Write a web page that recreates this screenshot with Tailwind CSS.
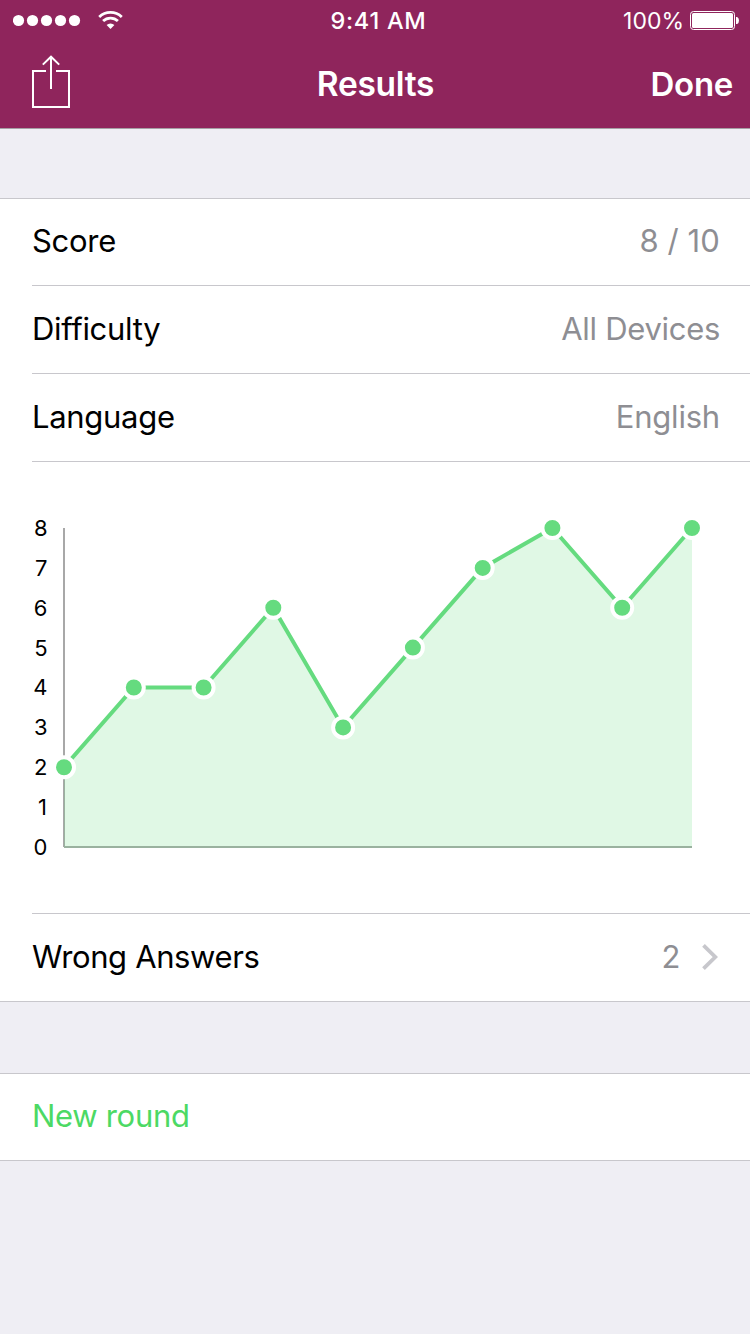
<!DOCTYPE html>
<html lang="en">
<head>
<meta charset="utf-8">
<title>Results</title>
<script src="https://cdn.jsdelivr.net/npm/@tailwindcss/browser@4"></script>
</head>
<body class="w-[750px] h-[1334px] overflow-hidden bg-[#efeef4] font-['Inter','Liberation_Sans',sans-serif] text-[31px] tracking-[-0.3px] leading-10 text-black">
<header class="h-[129px] bg-[#8f255c] border-b border-[#a6a0a5] text-white">
  <div class="h-10 grid grid-cols-3 items-center pl-[13px] pr-[11px]">
    <div class="flex items-center">
      <svg class="w-[110px] h-10" viewBox="0 0 110 40" fill="#fff">
        <circle cx="5.5" cy="20.5" r="5.6"/><circle cx="19.5" cy="20.5" r="5.6"/><circle cx="33.5" cy="20.5" r="5.6"/><circle cx="47.5" cy="20.5" r="5.6"/><circle cx="61.5" cy="20.5" r="5.6"/>
        <g fill="none" stroke="#fff" stroke-width="2.8"><path d="M86.2 16.9a16.2 16.2 0 0 1 22.6 0"/><path d="M90.1 21.1a10.6 10.6 0 0 1 14.8 0"/></g>
        <path d="M93.6 25a5.6 5.6 0 0 1 7.8 0l-3.9 4z"/>
      </svg>
    </div>
    <div class="text-center text-[23.5px] leading-9 font-medium tracking-[0.75px] pl-[5px] pt-px">9:41 AM</div>
    <div class="flex items-center justify-end gap-[6px]">
      <span class="text-[23px] leading-9 font-normal tracking-[0px] pt-0.5">100%</span>
      <svg class="w-[49px] h-10" viewBox="0 0 49 40" fill="#fff">
        <rect x="0.5" y="11.5" width="44" height="18" rx="3" fill="none" stroke="#fff"/>
        <rect x="2" y="13" width="41" height="15" rx="1.5"/>
        <path d="M46 17h1.2q1.800 1 1.800 3.500t-1.800 3.500H46z"/>
      </svg>
    </div>
  </div>
  <div class="h-[88px] grid grid-cols-3 items-center pl-8 pr-[17px]">
    <svg class="w-[38px] h-[54px] -mt-1" viewBox="0 0 38 54" fill="none" stroke="#fff" stroke-width="2">
      <path d="M14 16H1v36h36V16H24M19 34V2M10.800 9.600L19 1.700l8.200 7.900"/>
    </svg>
    <h1 class="text-center text-[33.500px] font-semibold pr-[14px]">Results</h1>
    <div class="text-right text-[33px] font-semibold">Done</div>
  </div>
</header>

<main>
  <section class="mt-[69px] border-y border-[#c8c7cc] bg-white">
    <div class="ml-8 pr-[30px] h-[87px] pb-[3px] border-b border-[#c8c7cc] flex items-center justify-between"><span>Score</span><span class="text-[#8e8e93] tracking-[0.1px]">8 / 10</span></div>
    <div class="ml-8 pr-[30px] h-[88px] pb-[2px] border-b border-[#c8c7cc] flex items-center justify-between"><span>Difficulty</span><span class="text-[#8e8e93]">All Devices</span></div>
    <div class="ml-8 pr-[30px] h-[88px] pb-[2px] border-b border-[#c8c7cc] flex items-center justify-between"><span>Language</span><span class="text-[#8e8e93] tracking-[-0.2px]">English</span></div>
    <div class="ml-8 h-[452px] border-b border-[#c8c7cc]">
      <svg class="block w-[718px] h-[451px]" viewBox="32 462 718 451">
        <g stroke="#a8a8a8" stroke-width="2"><path d="M64 528V847"/><path d="M64 847H692"/></g>
        <path fill="#65db7f" fill-opacity=".205" d="M64 767.250L133.800 687.500H203.600L273.300 607.750L343.100 727.400L412.900 647.600L482.700 567.900L552.400 528L622.200 607.750L692 528V848H64z"/>
        <path fill="none" stroke="#65db7f" stroke-width="4" d="M64 767.250L133.800 687.500H203.600L273.300 607.750L343.100 727.400L412.900 647.600L482.700 567.900L552.400 528L622.200 607.750L692 528"/>
        <g fill="#65db7f" stroke="#fff" stroke-width="4">
          <circle cx="64" cy="767.250" r="10"/><circle cx="133.800" cy="687.500" r="10"/><circle cx="203.600" cy="687.500" r="10"/><circle cx="273.300" cy="607.750" r="10"/><circle cx="343.100" cy="727.400" r="10"/><circle cx="412.900" cy="647.600" r="10"/><circle cx="482.700" cy="567.900" r="10"/><circle cx="552.400" cy="528" r="10"/><circle cx="622.200" cy="607.750" r="10"/><circle cx="692" cy="528" r="10"/>
        </g>
        <g class="text-[22px] tracking-normal" text-anchor="end" fill="#000">
          <text x="47.500" y="536">8</text><text x="47.500" y="576">7</text><text x="47.500" y="616">6</text><text x="47.500" y="656">5</text><text x="47.500" y="695.400">4</text><text x="47.500" y="735.400">3</text><text x="47.500" y="775">2</text><text x="47" y="815">1</text><text x="47.500" y="855">0</text>
        </g>
      </svg>
    </div>
    <div class="ml-8 pr-[31px] h-[87px] pb-[2px] flex items-center justify-between"><span class="tracking-[-0.36px]">Wrong Answers</span>
      <span class="flex items-center gap-[22px] text-[#8e8e93]">2
        <svg class="w-[17px] h-[28px] mt-px" viewBox="0 0 17 28" fill="none" stroke="#c7c7cc" stroke-width="3.800"><path d="M1.500 2.300L13.300 14L1.500 25.700"/></svg>
      </span>
    </div>
  </section>
  <section class="mt-[71px] border-y border-[#c8c7cc] bg-white">
    <div class="pl-8 h-[86px] pb-[3px] flex items-center text-[#4cd964]">New round</div>
  </section>
</main>
</body>
</html>
